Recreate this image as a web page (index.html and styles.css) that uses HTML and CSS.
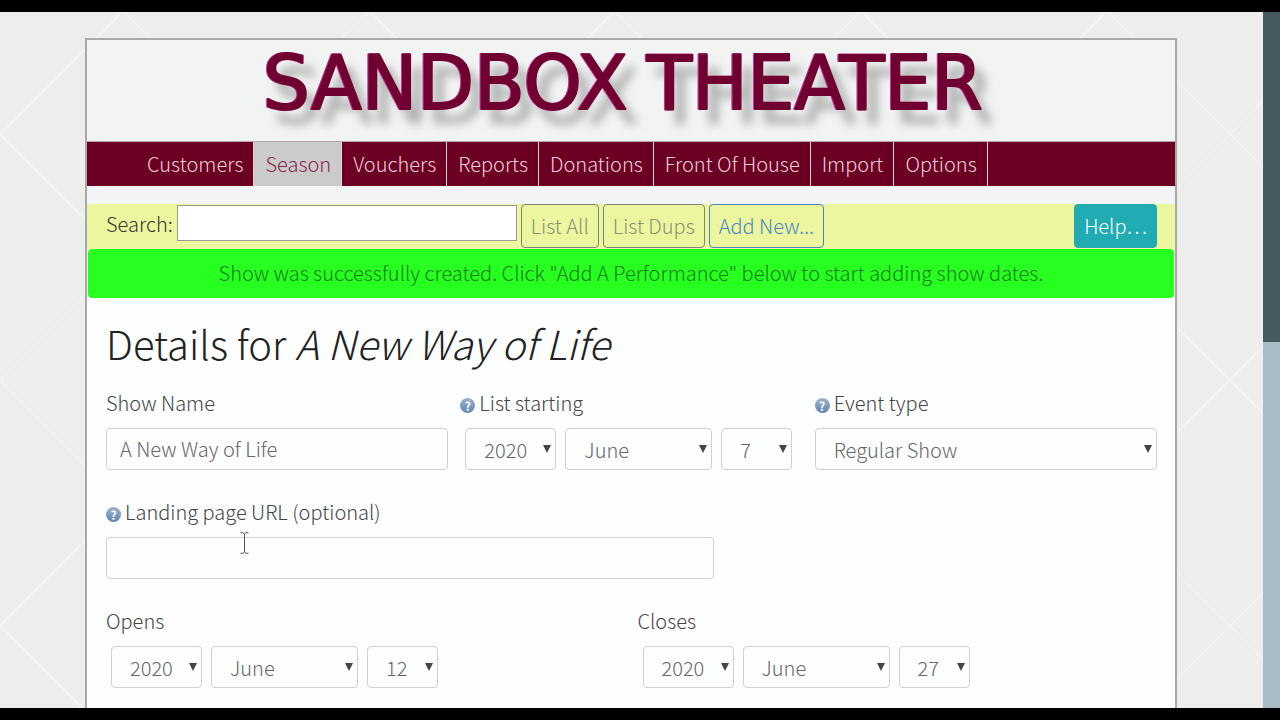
FILE: index.html
```html
<!DOCTYPE html>
<html lang="en">
<head>
  <meta charset="UTF-8">
  <meta name="viewport" content="width=device-width, initial-scale=1.0">
  <title>Sandbox Theater - Show Details</title>
  <link rel="stylesheet" href="styles.css">
</head>

<body>
  <div class="window">
    <div class="backdrop">
      <div class="page">
        <header class="banner">
          <svg class="logo" viewBox="0 0 740 96" role="img" aria-label="Sandbox Theater">
            <defs>
              <filter id="emboss" x="-5%" y="-20%" width="110%" height="160%">
                <feDropShadow dx="-1" dy="0" stdDeviation="0" flood-color="#c8309a" result="edge"/>
                <feDropShadow in="edge" dx="11" dy="14" stdDeviation="5" flood-color="#888" flood-opacity=".6"/>
              </filter>
            </defs>
            <g class="logo-text" filter="url(#emboss)">
              <text x="2" y="69">SANDBOX</text>
              <text x="386" y="69">THEATER</text>
            </g>
          </svg>
        </header>

        <nav class="menu">
          <a href="#">Customers</a>
          <a href="#" class="active">Season</a>
          <a href="#">Vouchers</a>
          <a href="#">Reports</a>
          <a href="#">Donations</a>
          <a href="#">Front Of House</a>
          <a href="#">Import</a>
          <a href="#">Options</a>
        </nav>

        <form class="search-bar">
          <label for="search">Search:</label>
          <input type="text" id="search">
          <button type="button" class="btn">List All</button>
          <button type="button" class="btn">List Dups</button>
          <button type="button" class="btn btn-primary">Add New...</button>
          <button type="button" class="btn btn-help">Help…</button>
        </form>

        <div class="notice">Show was successfully created. Click "Add A Performance" below to start adding show dates.</div>

        <main class="content">
          <h1>Details for <em>A New Way of Life</em></h1>

          <form class="details">
            <div class="field span-4">
              <label for="show-name">Show Name</label>
              <input type="text" id="show-name" value="A New Way of Life">
            </div>

            <div class="field span-4">
              <label for="list-year"><span class="help">?</span>List starting</label>
              <div class="date">
                <div class="select year"><select id="list-year"><option>2020</option></select></div>
                <div class="select month"><select aria-label="List starting month"><option>June</option></select></div>
                <div class="select day"><select aria-label="List starting day"><option>7</option></select></div>
              </div>
            </div>

            <div class="field span-4">
              <label for="event-type"><span class="help">?</span>Event type</label>
              <div class="select"><select id="event-type"><option>Regular Show</option></select></div>
            </div>

            <div class="field span-7">
              <label for="landing-url"><span class="help">?</span>Landing page URL (optional)</label>
              <input type="text" id="landing-url">
              <!-- text cursor -->
              <svg class="cursor" viewBox="0 0 9 22" aria-hidden="true">
                <path d="M.5.7H3L4.5 2 6 .7h2.500M4.500 2v18M.5 21.300H3L4.500 20 6 21.300h2.500"/>
              </svg>
            </div>

            <div class="field row-start">
              <label for="opens-year">Opens</label>
              <div class="date">
                <div class="select year"><select id="opens-year"><option>2020</option></select></div>
                <div class="select month"><select aria-label="Opens month"><option>June</option></select></div>
                <div class="select day"><select aria-label="Opens day"><option>12</option></select></div>
              </div>
            </div>

            <div class="field span-6">
              <label for="closes-year">Closes</label>
              <div class="date">
                <div class="select year"><select id="closes-year"><option>2020</option></select></div>
                <div class="select month"><select aria-label="Closes month"><option>June</option></select></div>
                <div class="select day"><select aria-label="Closes day"><option>27</option></select></div>
              </div>
            </div>
          </form>
        </main>
      </div>
    </div>
    <div class="scrollbar"><div class="thumb"></div></div>
  </div>
</body>
</html>
```
FILE: styles.css
```css
/* General */
* {
  box-sizing: border-box;
}

body {
  margin: 0;
  background: #000;
  color: #333;
  font-family: "Noto Sans CJK JP", "Noto Sans", sans-serif;
  font-size: 20px;
  font-weight: 300;
  line-height: 32px;
}

input, select, button {
  font: inherit;
  color: inherit;
}

.window {
  display: flex;
  height: 100vh;
  padding: 12px 0;
}

/* Diamond pattern behind the page */
.backdrop {
  flex: 1;
  min-width: 0;
  overflow: hidden;
  padding: 26px 86px 0 85px;
  background-color: #ededec;
  background-image:
    linear-gradient(to top right, transparent 49.7%, #f3f3f2 49.8%, #f3f3f2 50.2%, transparent 50.3%),
    linear-gradient(to bottom right, transparent 49.7%, #f3f3f2 49.8%, #f3f3f2 50.2%, transparent 50.3%);
  background-size: 246px 246px;
  background-position: 0 122px;
}

.page {
  min-height: 100%;
  border: 2px solid #a8a8a8;
  border-bottom: none;
  background: #fdfefe;
}

.scrollbar {
  width: 17px;
  background: #a9bcc6;
}

.thumb {
  height: 330px;
  background: #455a61;
}

/* Banner */
.banner {
  display: flex;
  justify-content: center;
  height: 101px;
  background: #f2f4f4;
}

.logo {
  width: 740px;
  height: 96px;
}

.logo-text {
  fill: #700030;
  stroke: #700030;
  stroke-width: 2px;
  stroke-linejoin: round;
  font-family: "DejaVu Sans", sans-serif;
  font-size: 74px;
  font-weight: 400;
}

/* Menu */
.menu {
  display: flex;
  height: 45px;
  padding-left: 49px;
  border-top: 1px solid #b9a3ab;
  background: #6b0023;
}

.menu a {
  padding: 6px 10px 6px 11px;
  border-right: 1px solid #e8d5dc;
  color: #f3cfdd;
  text-decoration: none;
}

.menu a.active {
  background: #cbcbcb;
  color: #8a2450;
}

/* Search bar */
.search-bar {
  display: flex;
  align-items: flex-start;
  gap: 4px;
  height: 63px;
  padding: 0 18px 0 19px;
  border-top: 18px solid #f3f4f6;
  background: #ecf69e;
}

.search-bar label {
  padding-top: 4px;
}

.search-bar input {
  width: 340px;
  height: 36px;
  margin-top: 1px;
  padding: 0 4px;
  border: 1px solid #9a9c90;
  background: #fff;
}

.btn {
  height: 44px;
  padding: 0 9px;
  border: 1px solid #7d8277;
  border-radius: 4px;
  background: transparent;
  color: #8b8f78;
}

.btn-primary {
  border-color: #4a86c5;
  color: #4a86c5;
}

.btn-help {
  margin-left: auto;
  border-color: #20aab0;
  background: #20acb2;
  color: #fff;
}

.notice {
  margin: 0 1px;
  padding: 8px 16px 9px;
  border-radius: 4px;
  background: #26ff1f;
  color: #177d18;
  text-align: center;
}

/* Show details */
.content {
  padding: 21px 18px 24px 19px;
}

h1 {
  margin: 0 0 20px;
  color: #222;
  font-size: 40px;
  font-weight: 300;
  line-height: 48px;
}

.details {
  display: grid;
  grid-template-columns: repeat(12, minmax(0, 1fr));
  gap: 26px 12px;
}

.field {
  position: relative;
}

.span-4 {
  grid-column: span 4;
}

.span-6 {
  grid-column: span 6;
}

.span-7 {
  grid-column: span 7;
}

.row-start {
  grid-column: 1 / span 6;
}

.field label {
  display: flex;
  align-items: center;
  margin-bottom: 9px;
  color: #444;
}

.field input, .select select {
  display: block;
  width: 100%;
  height: 42px;
  padding: 0 13px 2px;
  border: 1px solid #ccd1d1;
  border-radius: 4px;
  background: #fdfefe;
  color: #666;
}

.select {
  position: relative;
}

.select select {
  appearance: none;
  padding: 2px 18px 0;
}

/* Arrow */
.select::after {
  content: "";
  position: absolute;
  top: 17px;
  right: 5px;
  border: 4px solid transparent;
  border-top: 8px solid #444;
  border-bottom: none;
  pointer-events: none;
}

.date {
  display: flex;
  gap: 9px;
  padding-left: 5px;
}

.year {
  width: 91px;
}

.month {
  width: 147px;
}

.day {
  width: 71px;
}

.help {
  width: 15px;
  height: 15px;
  margin: 5px 4px 0 0;
  border-radius: 50%;
  background: linear-gradient(#9db4cf, #5f83ae);
  color: #fff;
  font-size: 12px;
  font-weight: 700;
  line-height: 15px;
  text-align: center;
}

.cursor {
  position: absolute;
  left: 134px;
  top: 36px;
  width: 9px;
  height: 22px;
  fill: none;
  stroke: #555;
}
```
